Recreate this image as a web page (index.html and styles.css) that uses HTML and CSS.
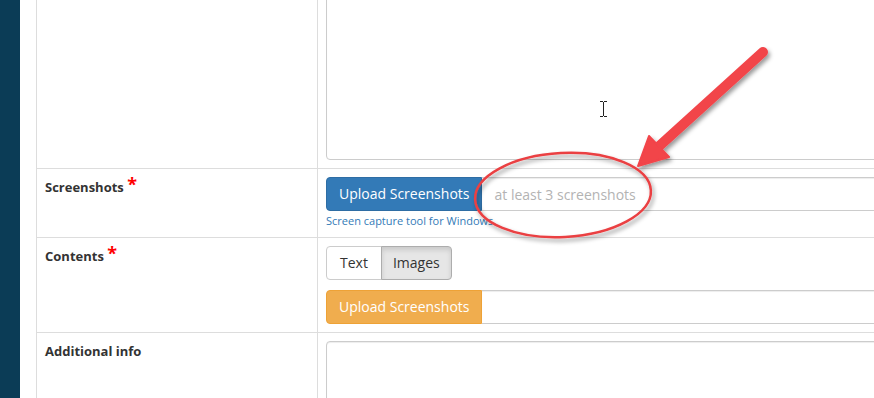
FILE: index.html
```html
<!DOCTYPE html>
<html lang="en">
<head>
    <meta charset="UTF-8">
    <meta name="viewport" content="width=device-width, initial-scale=1.0">
    <title>Submit Screenshots</title>
    <link rel="stylesheet" href="styles.css">
</head>
<body>
    <div class="page">
        <aside class="sidebar"></aside>
        <main class="main">
            <table class="form-table">
                <tr class="row-first">
                    <th class="label-cell"></th>
                    <td class="field-cell">
                        <textarea class="form-control big-text"></textarea>
                    </td>
                </tr>
                <tr>
                    <th class="label-cell">Screenshots <span class="req">*</span></th>
                    <td class="field-cell">
                        <div class="input-group">
                            <button class="btn btn-primary">Upload Screenshots</button>
                            <input type="text" class="form-control" placeholder="at least 3 screenshots">
                        </div>
                        <a class="help" href="#">Screen capture tool for Windows</a>
                    </td>
                </tr>
                <tr>
                    <th class="label-cell">Contents <span class="req">*</span></th>
                    <td class="field-cell">
                        <div class="btn-group">
                            <button class="btn btn-default">Text</button>
                            <button class="btn btn-default active">Images</button>
                        </div>
                        <div class="input-group">
                            <button class="btn btn-warning">Upload Screenshots</button>
                            <input type="text" class="form-control">
                        </div>
                    </td>
                </tr>
                <tr>
                    <th class="label-cell">Additional info</th>
                    <td class="field-cell">
                        <textarea class="form-control info-text"></textarea>
                    </td>
                </tr>
            </table>
        </main>
    </div>

    <!-- annotation drawn over the form -->
    <svg class="annotation" width="874" height="398" viewBox="0 0 874 398">
        <defs>
            <filter id="shade" x="-20%" y="-20%" width="140%" height="140%">
                <feDropShadow dx="2" dy="3" stdDeviation="2" flood-color="#000" flood-opacity="0.4"/>
            </filter>
        </defs>
        <g filter="url(#shade)">
            <ellipse cx="563" cy="195" rx="88" ry="42" transform="rotate(-3 563 195)" fill="none" stroke="#ea3f42" stroke-width="2.5"/>
            <line x1="763" y1="52" x2="656" y2="149" stroke="#f2444a" stroke-width="10" stroke-linecap="round"/>
            <polygon points="638,166 649,136 669,157" fill="#f2444a" stroke="#f2444a" stroke-width="2" stroke-linejoin="round"/>
        </g>
        <path class="ibeam" d="M600 101.5h3M604 101.5h3M603.5 102v14M600 116.5h3M604 116.5h3" stroke="#222" stroke-width="1" fill="none"/>
    </svg>
</body>
</html>
```

FILE: styles.css
```css
body {
    margin: 0;
    font-family: "Open Sans", Arial, sans-serif;
    font-size: 14px;
    color: #333;
    background: #fff;
    overflow: hidden;
}
.page {
    display: flex;
    min-height: 398px;
}
.sidebar {
    width: 20px;
    flex-shrink: 0;
    background: #0b3c56;
}
.main {
    padding-left: 16px;
    margin-top: -60px;
}
.form-table {
    border-collapse: collapse;
    width: 1000px;
    border-left: 1px solid #ddd;
}
.form-table th,
.form-table td {
    border-top: 1px solid #ddd;
    padding: 8px;
    vertical-align: top;
    text-align: left;
}
.label-cell {
    width: 264px;
    border-right: 1px solid #ddd;
    font-size: 13px;
    font-weight: bold;
    line-height: 20px;
}
.req {
    color: #f00;
    font-size: 18px;
    line-height: 10px;
    vertical-align: 1px;
}
.form-control {
    box-sizing: border-box;
    display: block;
    width: 100%;
    height: 34px;
    padding: 6px 12px;
    font-family: inherit;
    font-size: 14px;
    color: #555;
    border: 1px solid #ccc;
    border-radius: 4px;
    background: #fff;
    box-shadow: inset 0 1px 1px rgba(0, 0, 0, 0.075);
}
.form-control::placeholder {
    color: #b3b3b3;
}
.big-text {
    height: 211px;
    resize: none;
}
.info-text {
    height: 120px;
    resize: none;
}
.btn {
    font-family: inherit;
    font-size: 14px;
    line-height: 20px;
    padding: 6px 12px;
    border: 1px solid transparent;
    border-radius: 4px;
    white-space: nowrap;
    cursor: pointer;
}
.btn-primary {
    color: #fff;
    background: #337ab7;
    border-color: #2e6da4;
}
.btn-warning {
    color: #fff;
    background: #f0ad4e;
    border-color: #eea236;
}
.btn-default {
    color: #333;
    background: #fff;
    border-color: #ccc;
}
.btn-default.active {
    padding: 6px 11px;
    background: #e6e6e6;
    border-color: #adadad;
    box-shadow: inset 0 3px 5px rgba(0, 0, 0, 0.125);
}
.input-group {
    display: flex;
}
.input-group .btn {
    border-radius: 4px 0 0 4px;
}
.input-group .form-control {
    flex: 1;
    border-radius: 0 4px 4px 0;
    border-left: 0;
}
.btn-group {
    display: flex;
    margin-bottom: 10px;
}
.btn-group .btn:first-child {
    padding: 6px 13px;
    border-radius: 4px 0 0 4px;
}
.btn-group .btn:last-child {
    border-radius: 0 4px 4px 0;
    margin-left: -1px;
}
.help {
    display: block;
    margin-top: 2px;
    font-size: 11px;
    line-height: 16px;
    color: #337ab7;
    text-decoration: none;
}
.annotation {
    position: absolute;
    left: 0;
    top: 0;
    pointer-events: none;
}
```
